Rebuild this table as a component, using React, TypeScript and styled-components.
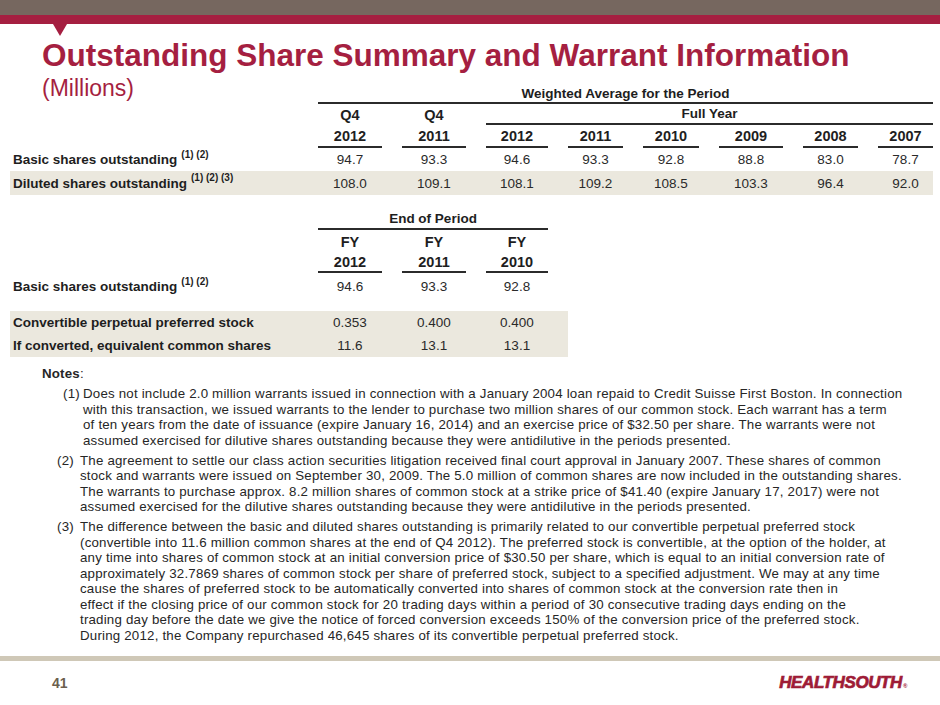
import styled, { createGlobalStyle } from "styled-components";

const RED = "#a51f41";
const INK = "#1e1e1e";
const SHADE = "#ebe8de";
const RULE = "2px solid #2b2b2b";

const WEIGHTED_COLS = "288px 64px 64px 62px 55px 56px 64px 55px 55px";
const END_COLS = "288px 64px 64px 62px";

const weightedYears = ["2012", "2011", "2012", "2011", "2010", "2009", "2008", "2007"];
const basicWeighted = ["94.7", "93.3", "94.6", "93.3", "92.8", "88.8", "83.0", "78.7"];
const dilutedWeighted = ["108.0", "109.1", "108.1", "109.2", "108.5", "103.3", "96.4", "92.0"];

const endYears = ["2012", "2011", "2010"];
const basicEnd = ["94.6", "93.3", "92.8"];
const convertible = ["0.353", "0.400", "0.400"];
const ifConverted = ["11.6", "13.1", "13.1"];

const notes = [
	{
		num: "(1)",
		shift: 6,
		width: 20,
		lines: [
			"Does not include 2.0 million warrants issued in connection with a January 2004 loan repaid to Credit Suisse First Boston. In connection",
			"with this transaction, we issued warrants to the lender to purchase two million shares of our common stock. Each warrant has a term",
			"of ten years from the date of issuance (expire January 16, 2014) and an exercise price of $32.50 per share. The warrants were not",
			"assumed exercised for dilutive shares outstanding because they were antidilutive in the periods presented.",
		],
	},
	{
		num: "(2)",
		shift: 0,
		width: 23,
		lines: [
			"The agreement to settle our class action securities litigation received final court approval in January 2007. These shares of common",
			"stock and warrants were issued on September 30, 2009. The 5.0 million of common shares are now included in the outstanding shares.",
			"The warrants to purchase approx. 8.2 million shares of common stock at a strike price of $41.40 (expire January 17, 2017) were not",
			"assumed exercised for the dilutive shares outstanding because they were antidilutive in the periods presented.",
		],
	},
	{
		num: "(3)",
		shift: 0,
		width: 23,
		lines: [
			"The difference between the basic and diluted shares outstanding is primarily related to our convertible perpetual preferred stock",
			"(convertible into 11.6 million common shares at the end of Q4 2012). The preferred stock is convertible, at the option of the holder, at",
			"any time into shares of common stock at an initial conversion price of $30.50 per share, which is equal to an initial conversion rate of",
			"approximately 32.7869 shares of common stock per share of preferred stock, subject to a specified adjustment. We may at any time",
			"cause the shares of preferred stock to be automatically converted into shares of common stock at the conversion rate then in",
			"effect if the closing price of our common stock for 20 trading days within a period of 30 consecutive trading days ending on the",
			"trading day before the date we give the notice of forced conversion exceeds 150% of the conversion price of the preferred stock.",
			"During 2012, the Company repurchased 46,645 shares of its convertible perpetual preferred stock.",
		],
	},
];

const GlobalStyle = createGlobalStyle`
	html, body {
		margin: 0;
		padding: 0;
		background: #fff;
	}
	body {
		font-family: "Liberation Sans", Arial, sans-serif;
	}
`;

const Page = styled.div`
	width: 940px;
	height: 705px;
	display: flex;
	flex-direction: column;
	overflow: hidden;
	background: #fff;
`;

const TopBand = styled.div`
	height: 15px;
	background: #76675f;
`;

const RedBand = styled.div`
	height: 9px;
	background: ${RED};
`;

const Pointer = styled.svg`
	display: block;
	margin-left: 53px;
	width: 14px;
	height: 12px;
`;

const Title = styled.h1`
	margin: 1px 0 0;
	padding-left: 42px;
	font-size: 31.5px;
	line-height: 36px;
	font-weight: 700;
	color: ${RED};
	white-space: nowrap;
`;

const Table = styled.div<{ $gap: number }>`
	margin-top: ${(p) => p.$gap}px;
	padding-left: 10px;
	display: flex;
	flex-direction: column;
	align-items: flex-start;
	color: ${INK};
	font-size: 13.5px;
`;

const Row = styled.div<{ $cols: string; $h: number; $shade?: boolean; $trail?: number }>`
	display: grid;
	grid-template-columns: ${(p) => p.$cols};
	column-gap: 20px;
	height: ${(p) => p.$h}px;
	padding-right: ${(p) => p.$trail ?? 0}px;
	background: ${(p) => (p.$shade ? SHADE : "transparent")};
	align-items: stretch;
`;

const Subtitle = styled.div`
	align-self: start;
	padding-left: 32px;
	font-size: 23px;
	line-height: 26px;
	color: ${RED};
	white-space: nowrap;
`;

const Label = styled.div`
	display: flex;
	align-items: center;
	padding-left: 3px;
	font-weight: 700;
	white-space: nowrap;
`;

const Sup = styled.span`
	font-size: 10px;
	line-height: 0;
	margin-left: 4px;
	position: relative;
	top: -5px;
`;

const Head = styled.div<{ $span?: string; $rule?: boolean; $h?: number; $end?: boolean; $big?: boolean }>`
	grid-column: ${(p) => p.$span ?? "auto"};
	align-self: ${(p) => (p.$end ? "end" : "stretch")};
	height: ${(p) => (p.$h ? `${p.$h}px` : "auto")};
	box-sizing: border-box;
	display: flex;
	align-items: center;
	justify-content: center;
	font-size: ${(p) => (p.$big ? 14.5 : 13.5)}px;
	font-weight: 700;
	white-space: nowrap;
	border-bottom: ${(p) => (p.$rule ? RULE : "none")};
`;

const Num = styled.div`
	display: flex;
	align-items: center;
	justify-content: center;
	font-size: 13.5px;
	color: #2a2a2a;
`;

const Spacer = styled.div<{ $h: number }>`
	height: ${(p) => p.$h}px;
`;

const Notes = styled.div`
	margin-top: 9px;
	font-size: 13.3px;
	line-height: 15.5px;
	letter-spacing: 0.2px;
	color: #262626;
`;

const NotesTitle = styled.div`
	padding-left: 42px;

	b {
		font-weight: 700;
	}
`;

const Note = styled.div<{ $shift: number }>`
	display: flex;
	margin-top: 4.5px;
	padding-left: ${(p) => 57 + p.$shift}px;
	white-space: nowrap;
`;

const NoteNum = styled.span<{ $w: number }>`
	flex: 0 0 ${(p) => p.$w}px;
`;

const Footer = styled.footer`
	margin-top: auto;
`;

const FooterBar = styled.div`
	height: 5px;
	background: #cfc8b7;
`;

const FooterRow = styled.div`
	height: 44px;
	display: flex;
	align-items: center;
	justify-content: space-between;
	padding: 0 33px 0 52px;
`;

const PageNum = styled.span`
	font-size: 14px;
	font-weight: 700;
	color: #6b5f4e;
`;

const Logo = styled.span`
	font-size: 17px;
	font-weight: 700;
	font-style: italic;
	letter-spacing: -0.4px;
	color: #9e1b36;
	-webkit-text-stroke: 0.7px #9e1b36;

	small {
		font-size: 6px;
		font-style: normal;
		-webkit-text-stroke: 0;
		margin-left: 1px;
	}
`;

export default function App() {
	return (
		<Page>
			<GlobalStyle />
			<TopBand />
			<RedBand />
			<Pointer viewBox="0 0 14 12">
				<polygon points="0,0 14,0 7,12" fill={RED} />
			</Pointer>
			<Title>Outstanding Share Summary and Warrant Information</Title>

			<Table $gap={2}>
				<Row $cols={WEIGHTED_COLS} $h={29}>
					<Subtitle>(Millions)</Subtitle>
					<Head $span="2 / -1" $rule $h={19} $end>
						Weighted Average for the Period
					</Head>
				</Row>
				<Row $cols={WEIGHTED_COLS} $h={21}>
					<div />
					<Head $big>Q4</Head>
					<Head $big>Q4</Head>
					<Head $span="4 / -1" $rule>
						Full Year
					</Head>
				</Row>
				<Row $cols={WEIGHTED_COLS} $h={23}>
					<div />
					{weightedYears.map((y, i) => (
						<Head key={i} $rule $big>
							{y}
						</Head>
					))}
				</Row>
				<Row $cols={WEIGHTED_COLS} $h={23}>
					<Label>
						Basic shares outstanding <Sup>(1) (2)</Sup>
					</Label>
					{basicWeighted.map((v, i) => (
						<Num key={i}>{v}</Num>
					))}
				</Row>
				<Row $cols={WEIGHTED_COLS} $h={24} $shade>
					<Label>
						Diluted shares outstanding <Sup>(1) (2) (3)</Sup>
					</Label>
					{dilutedWeighted.map((v, i) => (
						<Num key={i}>{v}</Num>
					))}
				</Row>
			</Table>

			<Table $gap={14}>
				<Row $cols={END_COLS} $h={21} $trail={20}>
					<div />
					<Head $span="2 / -1" $rule>
						End of Period
					</Head>
				</Row>
				<Row $cols={END_COLS} $h={23} $trail={20}>
					<div />
					{endYears.map((y) => (
						<Head key={y} $big>
							FY
						</Head>
					))}
				</Row>
				<Row $cols={END_COLS} $h={20} $trail={20}>
					<div />
					{endYears.map((y) => (
						<Head key={y} $rule $big>
							{y}
						</Head>
					))}
				</Row>
				<Row $cols={END_COLS} $h={27} $trail={20}>
					<Label>
						Basic shares outstanding <Sup>(1) (2)</Sup>
					</Label>
					{basicEnd.map((v, i) => (
						<Num key={i}>{v}</Num>
					))}
				</Row>
				<Spacer $h={11} />
				<Row $cols={END_COLS} $h={23} $trail={20} $shade>
					<Label>Convertible perpetual preferred stock</Label>
					{convertible.map((v, i) => (
						<Num key={i}>{v}</Num>
					))}
				</Row>
				<Row $cols={END_COLS} $h={23} $trail={20} $shade>
					<Label>If converted, equivalent common shares</Label>
					{ifConverted.map((v, i) => (
						<Num key={i}>{v}</Num>
					))}
				</Row>
			</Table>

			<Notes>
				<NotesTitle>
					<b>Notes</b>:
				</NotesTitle>
				{notes.map((n) => (
					<Note key={n.num} $shift={n.shift}>
						<NoteNum $w={n.width}>{n.num}</NoteNum>
						<div>
							{n.lines.map((l, i) => (
								<div key={i}>{l}</div>
							))}
						</div>
					</Note>
				))}
			</Notes>

			<Footer>
				<FooterBar />
				<FooterRow>
					<PageNum>41</PageNum>
					<Logo>
						HEALTHSOUTH<small>®</small>
					</Logo>
				</FooterRow>
			</Footer>
		</Page>
	);
}
